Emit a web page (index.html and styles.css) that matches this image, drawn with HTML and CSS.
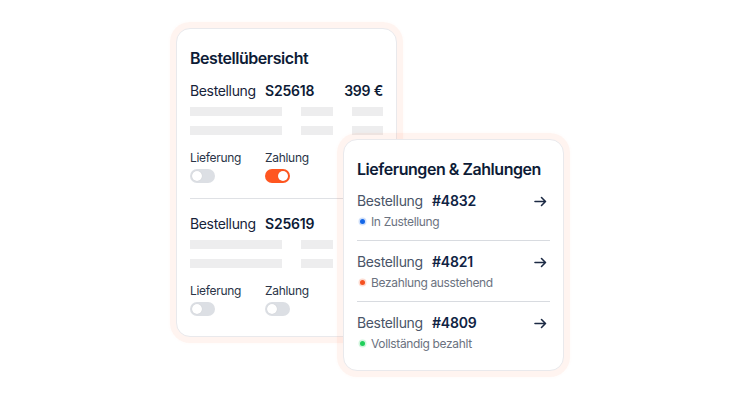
FILE: index.html
```html
<!DOCTYPE html>
<html lang="de">
<head>
<meta charset="utf-8">
<link rel="stylesheet" href="styles.css">
</head>
<body>
<div class="stage">
  <section class="card card-orders">
    <h2 class="title">Bestellübersicht</h2>

    <div class="order">
      <div class="order-head">
        <span class="lbl">Bestellung</span>
        <span class="num">S25618</span>
        <span class="price">399 €</span>
      </div>
      <div class="bars"><i class="b1"></i><i class="b2"></i><i class="b3"></i></div>
      <div class="bars"><i class="b1"></i><i class="b2"></i><i class="b3"></i></div>
      <div class="toggles">
        <div class="tg"><span class="tg-lbl">Lieferung</span><span class="switch"></span></div>
        <div class="tg"><span class="tg-lbl">Zahlung</span><span class="switch on"></span></div>
      </div>
    </div>

    <div class="order second">
      <div class="order-head">
        <span class="lbl">Bestellung</span>
        <span class="num">S25619</span>
      </div>
      <div class="bars"><i class="b1"></i><i class="b2"></i><i class="b3"></i></div>
      <div class="bars"><i class="b1"></i><i class="b2"></i><i class="b3"></i></div>
      <div class="toggles">
        <div class="tg"><span class="tg-lbl">Lieferung</span><span class="switch"></span></div>
        <div class="tg"><span class="tg-lbl">Zahlung</span><span class="switch"></span></div>
      </div>
    </div>
  </section>

  <section class="card card-pay">
    <h2 class="title">Lieferungen &amp; Zahlungen</h2>
    <ul class="list">
      <li class="item">
        <div class="item-head">
          <span class="lbl">Bestellung</span><span class="num">#4832</span>
          <svg class="arrow" width="13" height="11" viewBox="0 0 13 11"><path d="M1 5.5H11.5M7.5 1.5L11.5 5.5L7.5 9.5" fill="none" stroke="#1c2a44" stroke-width="1.6" stroke-linecap="round" stroke-linejoin="round"/></svg>
        </div>
        <div class="status"><span class="dot blue"></span>In Zustellung</div>
      </li>
      <li class="item">
        <div class="item-head">
          <span class="lbl">Bestellung</span><span class="num">#4821</span>
          <svg class="arrow" width="13" height="11" viewBox="0 0 13 11"><path d="M1 5.5H11.5M7.5 1.5L11.5 5.5L7.5 9.5" fill="none" stroke="#1c2a44" stroke-width="1.6" stroke-linecap="round" stroke-linejoin="round"/></svg>
        </div>
        <div class="status"><span class="dot red"></span>Bezahlung ausstehend</div>
      </li>
      <li class="item">
        <div class="item-head">
          <span class="lbl">Bestellung</span><span class="num">#4809</span>
          <svg class="arrow" width="13" height="11" viewBox="0 0 13 11"><path d="M1 5.5H11.5M7.5 1.5L11.5 5.5L7.5 9.5" fill="none" stroke="#1c2a44" stroke-width="1.6" stroke-linecap="round" stroke-linejoin="round"/></svg>
        </div>
        <div class="status"><span class="dot green"></span>Vollständig bezahlt</div>
      </li>
    </ul>
  </section>
</div>
</body>
</html>
```

FILE: styles.css
```css
* { box-sizing: border-box; }
html, body { margin: 0; padding: 0; background: #fff; }
body {
  font-family: Inter, "Noto Sans", "Liberation Sans", sans-serif;
  color: #0e1c36;
  width: 740px;
  height: 400px;
  overflow: hidden;
}
.stage {
  position: relative;
  width: 740px;
  height: 400px;
  padding: 28px 0 0 176px;
}
.card {
  background: #fff;
  border: 1px solid #e9e9ec;
  border-radius: 14px;
  box-shadow: 0 0 0 6px rgba(255, 96, 40, 0.05), 0 0 3px 7px rgba(255, 96, 40, 0.02);
}
.title {
  margin: 0;
  font-size: 16px;
  line-height: 20px;
  font-weight: 600;
  color: #0d1b36;
  letter-spacing: -0.45px;
}
.card-orders {
  width: 221px;
  height: 309px;
  padding: 19px 13px 0 13px;
}
.order { display: flex; flex-direction: column; padding-top: 14px; }
.order.second {
  border-top: 1px solid #dfe1e5;
  margin-top: 15px;
  padding-top: 16px;
}
.order-head {
  display: flex;
  font-size: 14px;
  line-height: 18px;
  color: #17233a;
  letter-spacing: -0.35px;
}
.order-head .lbl { width: 75px; }
.order-head .num { font-weight: 600; color: #0d1b36; letter-spacing: -0.2px; }
.order-head .price { margin-left: auto; font-weight: 600; color: #0d1b36; letter-spacing: -0.2px; }
.bars { display: flex; gap: 19px; margin-top: 10px; }
.order-head + .bars { margin-top: 7px; }
.bars i { display: block; height: 9px; background: #ededee; }
.bars .b1 { width: 92px; }
.bars .b2 { width: 32px; }
.bars .b3 { width: 31px; }
.toggles { display: flex; margin-top: 15px; }
.tg { width: 75px; display: flex; flex-direction: column; gap: 4px; }
.tg-lbl { font-size: 12px; line-height: 15px; color: #2a3447; letter-spacing: -0.3px; }
.switch {
  position: relative;
  width: 25px;
  height: 14px;
  border-radius: 7px;
  background: #dcdfe4;
}
.switch::after {
  content: "";
  position: absolute;
  top: 2px;
  left: 2px;
  width: 10px;
  height: 10px;
  border-radius: 50%;
  background: #fff;
  box-shadow: 0 0 1px rgba(0,0,0,0.15);
}
.switch.on { background: #ff5620; }
.switch.on::after { left: 13px; }

.card-pay {
  position: absolute;
  left: 343px;
  top: 139px;
  width: 221px;
  height: 232px;
  padding: 19px 13px 0 13px;
}
.list { list-style: none; margin: 1px 0 0; padding: 0; }
.item {
  padding: 12px 0 11px;
  border-bottom: 1px solid #d8dbe0;
  display: flex;
  flex-direction: column;
  gap: 4px;
}
.item:last-child { border-bottom: 0; }
.item-head {
  display: flex;
  align-items: center;
  font-size: 14px;
  line-height: 18px;
  letter-spacing: -0.35px;
}
.item-head .lbl { width: 75px; color: #4a5568; }
.item-head .num { font-weight: 600; color: #0f2344; letter-spacing: -0.2px; }
.arrow { margin-left: auto; margin-right: 3px; }
.status {
  display: flex;
  align-items: center;
  font-size: 12px;
  line-height: 15px;
  color: #6b7280;
  letter-spacing: -0.35px;
}
.dot {
  width: 5px;
  height: 5px;
  border-radius: 50%;
  margin: 0 6px 0 3px;
}
.dot.blue { background: #1366e8; box-shadow: 0 0 0 1.5px rgba(19,102,232,0.2); }
.dot.red { background: #f5501f; box-shadow: 0 0 0 1.5px rgba(245,80,31,0.2); }
.dot.green { background: #1fcf5a; box-shadow: 0 0 0 1.5px rgba(31,207,90,0.2); }
```
